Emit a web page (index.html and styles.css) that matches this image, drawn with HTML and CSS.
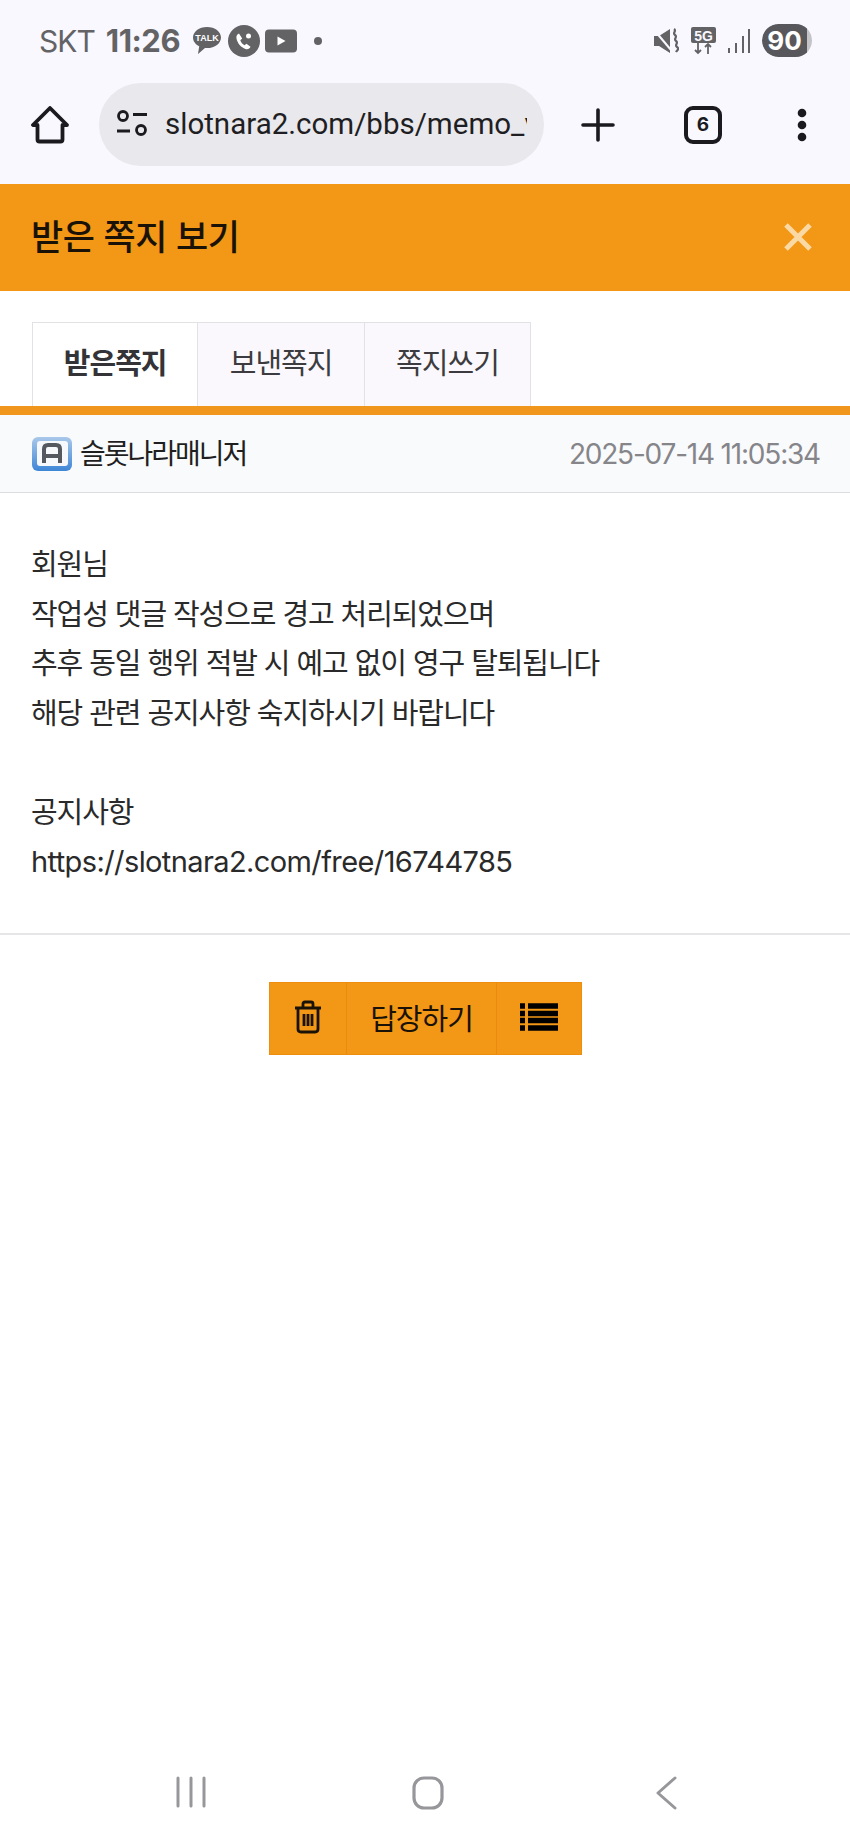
FILE: index.html
```html
<!DOCTYPE html>
<html lang="ko">
<head>
<meta charset="utf-8">
<title>받은 쪽지 보기</title>
<link rel="stylesheet" href="styles.css">
</head>
<body>
<div class="chrome">
  <div class="status">
    <div class="status-left">
      <span class="carrier">SKT</span>
      <span class="clock">11:26</span>
      <svg class="ic-talk" viewBox="0 0 30 30"><path d="M15 1C7 1 1 5.700 1 11.500c0 3.700 2.500 7 6.200 8.800L6 28l7-6c.7.100 1.300.1 2 .1 8 0 14-4.800 14-10.600S23 1 15 1z" fill="#636366"/><text x="15" y="15" class="talk-text">TALK</text></svg>
      <svg class="ic-call" viewBox="0 0 32 32"><circle cx="16" cy="16" r="16" fill="#636366"/><path d="M11 8.500c-2 1-3 2.500-2.500 5 .8 4.500 4.500 9 9 10.500 2.500.6 4.300-.4 5-2.300l-4-3-2 1.500c-2-1-3.500-3-4.200-5l1.900-1.700z" fill="#fff"/><circle cx="20.500" cy="11" r="2.500" fill="#fff"/></svg>
      <svg class="ic-yt" viewBox="0 0 32 24"><rect width="32" height="23" y=".5" rx="4" fill="#636366"/><path d="M12.500 7.500v9l8-4.500z" fill="#fff"/></svg>
      <span class="dot"></span>
    </div>
    <div class="status-right">
      <svg class="ic-mute" viewBox="0 0 26 26"><path d="M1 8h5l11-7v24l-11-7H1z" fill="#636366"/><path d="M2 3l16 19" stroke="#f8f8fe" stroke-width="2"/><path d="M21 1c3 2-2 4 1 6s-2 4 1 6-2 4 1 6 0 3-1 5" fill="none" stroke="#636366" stroke-width="2.200"/></svg>
      <svg class="ic-5g" viewBox="0 0 25 28"><rect width="25" height="16" rx="2" fill="#636366"/><text x="12.500" y="13.500" class="g-text">5G</text><path d="M7 16v10m-3-3l3 3 3-3M17 27V17m-3 3l3-3 3 3" fill="none" stroke="#636366" stroke-width="1.800"/></svg>
      <svg class="ic-sig" viewBox="0 0 24 26"><g fill="#636366"><rect x="1" y="20" width="2" height="5"/><rect x="8" y="15" width="2" height="10"/><rect x="15" y="8" width="2" height="17"/><rect x="21" y="1" width="2" height="24"/></g></svg>
      <span class="battery"><span class="battery-fill">90</span></span>
    </div>
  </div>
  <div class="toolbar">
    <svg class="ic-home" viewBox="0 0 38 38"><path d="M19 2L2 19h4.500v14.500a2 2 0 0 0 2 2h21a2 2 0 0 0 2-2V19H36z" fill="none" stroke="#1b1b1f" stroke-width="3.800" stroke-linejoin="round"/></svg>
    <div class="omnibox">
      <svg class="ic-tune" viewBox="0 0 32 26"><circle cx="7" cy="6" r="4.500" fill="none" stroke="#1b1b1f" stroke-width="2.800"/><path d="M17 4.500h14M1 21h13" stroke="#1b1b1f" stroke-width="2.800"/><circle cx="25" cy="20" r="4.500" fill="none" stroke="#1b1b1f" stroke-width="2.800"/></svg>
      <span class="url">slotnara2.com/bbs/memo_v</span>
    </div>
    <svg class="ic-plus" viewBox="0 0 34 34"><path d="M17 2v30M2 17h30" stroke="#1b1b1f" stroke-width="3.600" stroke-linecap="round"/></svg>
    <span class="tabcount">6</span>
    <svg class="ic-more" viewBox="0 0 10 34"><circle cx="5" cy="5" r="4.300" fill="#1b1b1f"/><circle cx="5" cy="17" r="4.300" fill="#1b1b1f"/><circle cx="5" cy="29" r="4.300" fill="#1b1b1f"/></svg>
  </div>
</div>

<header class="head">
  <h1 class="head-title">받은 쪽지 보기</h1>
  <svg class="ic-close" viewBox="0 0 32 32"><path d="M4 4l24 24M28 4L4 28" stroke="#fbd9a4" stroke-width="5"/></svg>
</header>

<nav class="tabs">
  <a class="tab tab-on">받은쪽지</a>
  <a class="tab">보낸쪽지</a>
  <a class="tab">쪽지쓰기</a>
</nav>

<div class="meta">
  <div class="sender">
    <svg class="ic-level" viewBox="0 0 42 36"><defs><linearGradient id="lv" x1="0" y1="0" x2="0" y2="1"><stop offset="0" stop-color="#a9c8ea"/><stop offset="1" stop-color="#3f86d6"/></linearGradient></defs><rect x="1" y="1" width="40" height="34" rx="6" fill="url(#lv)"/><rect x="6" y="5" width="31" height="25" rx="3" fill="#f6f8fb"/><path d="M13 27V13q0-4 4-4h8q4 0 4 4v14M13 20h16" fill="none" stroke="#55585e" stroke-width="4"/></svg>
    <span class="sender-name">슬롯나라매니저</span>
  </div>
  <time class="date">2025-07-14 11:05:34</time>
</div>

<article class="body">
  <p class="line">회원님</p>
  <p class="line">작업성 댓글 작성으로 경고 처리되었으며</p>
  <p class="line">추후 동일 행위 적발 시 예고 없이 영구 탈퇴됩니다</p>
  <p class="line">해당 관련 공지사항 숙지하시기 바랍니다</p>
  <p class="line">&nbsp;</p>
  <p class="line">공지사항</p>
  <p class="line line-url">https://slotnara2.com/free/16744785</p>
</article>

<div class="actions">
  <div class="btn-group">
    <a class="btn btn-icon"><svg class="ic-trash" viewBox="0 0 28 34"><path d="M1 8h26M9 7V4q0-2 2-2h6q2 0 2 2v3M4 8v21q0 3 3 3h14q3 0 3-3V8M10 14v12M14 14v12M18 14v12" fill="none" stroke="#1a1206" stroke-width="2.800"/></svg></a>
    <a class="btn btn-text">답장하기</a>
    <a class="btn btn-icon btn-list"><svg class="ic-list" viewBox="0 0 38 30"><path d="M0 4h5M8 4h30M0 11.500h5M8 11.500h30M0 18.500h5M8 18.500h30M0 26h5M8 26h30" stroke="#000" stroke-width="5.500"/></svg></a>
  </div>
</div>

<div class="spacer"></div>

<footer class="nav">
  <svg class="ic-recent" viewBox="0 0 32 32"><path d="M3 2v28M16 2v28M29 2v28" stroke="#97979b" stroke-width="3" stroke-linecap="round"/></svg>
  <svg class="ic-homebtn" viewBox="0 0 32 34"><rect x="2" y="2" width="28" height="30" rx="10" fill="none" stroke="#97979b" stroke-width="3.200"/></svg>
  <svg class="ic-back" viewBox="0 0 22 34"><path d="M20 2L3 17l17 15" fill="none" stroke="#97979b" stroke-width="3" stroke-linecap="round" stroke-linejoin="round"/></svg>
</footer>
</body>
</html>
```

FILE: styles.css
```css
* { box-sizing: border-box; }
html, body { margin: 0; padding: 0; }
body {
  width: 850px;
  height: 1842px;
  display: flex;
  flex-direction: column;
  background: #fff;
  font-family: Inter, "Noto Sans CJK KR", "Noto Sans", sans-serif;
  color: #1f1f1f;
  overflow: hidden;
}
.chrome { background: #f8f8fe; height: 184px; flex: none; }
.status {
  height: 83px;
  display: flex;
  justify-content: space-between;
  align-items: center;
  padding: 0 38px 2px 39px;
}
.status-left, .status-right { display: flex; align-items: center; }
.carrier { font: 400 30px/1 Inter, sans-serif; color: #636366; letter-spacing: -1px; }
.clock { font: 700 31px/1 Inter, sans-serif; color: #636366; margin-left: 11px; letter-spacing: -.5px; }
.ic-talk { width: 30px; height: 30px; margin-left: 12px; }
.talk-text { font: 700 9px "Liberation Sans", sans-serif; fill: #fff; text-anchor: middle; }
.ic-call { width: 32px; height: 32px; margin-left: 6px; }
.ic-yt { width: 32px; height: 24px; margin-left: 5px; }
.dot { width: 8px; height: 8px; border-radius: 50%; background: #636366; margin-left: 17px; }
.ic-mute { width: 26px; height: 26px; }
.ic-5g { width: 25px; height: 28px; margin-left: 12px; }
.g-text { font: 700 14px "Liberation Sans", sans-serif; fill: #f8f8fe; text-anchor: middle; }
.ic-sig { width: 24px; height: 26px; margin-left: 11px; }
.battery { width: 50px; height: 33px; margin-left: 11px; border-radius: 17px; background: #c4c4c8; overflow: hidden; display: block; }
.battery-fill { display: block; width: 45px; height: 33px; border-radius: 17px 4px 4px 17px; background: #58585c; color: #fff; font: 700 26px/33px Inter, sans-serif; text-align: center; }
.toolbar { height: 101px; display: flex; align-items: flex-start; position: relative; }
.ic-home { width: 38px; height: 38px; margin: 23px 0 0 31px; flex: none; }
.omnibox {
  width: 445px;
  height: 83px;
  margin-left: 30px;
  border-radius: 42px;
  background: #e8e8ed;
  display: flex;
  align-items: center;
  padding: 0 17px 0 17px;
  flex: none;
  overflow: hidden;
}
.ic-tune { width: 32px; height: 26px; flex: none; margin: 0 0 3px 0; }
.url { font: 400 29.500px/1.2 Roboto, sans-serif; color: #1f1f23; margin-left: 17px; white-space: nowrap; overflow: hidden; flex: 1; }
.ic-plus { width: 34px; height: 34px; margin: 25px 0 0 37px; flex: none; }
.tabcount {
  width: 38px; height: 38px; margin: 23px 0 0 69px; flex: none;
  border: 4px solid #1b1b1f; border-radius: 9px;
  font: 700 19px/30px Inter, sans-serif; text-align: center; color: #1b1b1f;
}
.ic-more { width: 10px; height: 34px; margin: 25px 0 0 75px; flex: none; }

.head {
  height: 107px;
  flex: none;
  background: #f29716;
  display: flex;
  align-items: center;
  justify-content: space-between;
  padding: 0 36px 0 31px;
}
.head-title { margin: 0 0 6px; font-size: 35px; font-weight: 500; color: #1a1206; letter-spacing: -.4px; }
.ic-close { width: 32px; height: 32px; margin-bottom: 2px; }

.tabs {
  flex: none;
  margin-top: 31px;
  padding-left: 32px;
  height: 93px;
  border-bottom: 9px solid #f0961d;
  display: flex;
}
.tab {
  width: 166.400px;
  height: 84px;
  border: 1px solid #e2e2e6;
  border-left-width: 0;
  border-bottom: 0;
  background: #fbf8fd;
  font-size: 29px;
  line-height: 82px;
  text-align: center;
  color: #3c3c40;
  letter-spacing: -1px;
}
.tab-on { background: #fff; border-left-width: 1px; font-weight: 700; color: #333338; }

.meta {
  flex: none;
  height: 78px;
  background: #f9fafc;
  border-bottom: 1px solid #dcdde0;
  padding: 0 30px 0 31px;
  display: flex;
  align-items: center;
  justify-content: space-between;
}
.sender { display: flex; align-items: center; }
.ic-level { width: 42px; height: 36px; }
.sender-name { font-size: 28px; color: #1f1f1f; margin: 0 0 4px 7px; letter-spacing: -2px; }
.date { font: 400 28px/1 Inter, sans-serif; color: #85858a; letter-spacing: -1.200px; }

.body { flex: none; padding: 47px 31px 0; border-bottom: 2px solid #e6e6e8; height: 442px; }
.line { margin: 0; font-size: 29px; line-height: 49.500px; color: #2a2a2a; letter-spacing: -1.100px; white-space: nowrap; }
.line-url { letter-spacing: -.6px; }

.actions { flex: none; display: flex; justify-content: center; padding-top: 47px; padding-left: 1px; }
.btn-group { display: flex; height: 73px; background: #f29716; border: 1px solid #ee8e10; }
.btn { display: flex; align-items: center; justify-content: center; height: 100%; }
.btn-icon { width: 76px; }
.btn-text { width: 151px; font-size: 29px; color: #1a1206; letter-spacing: -1px; padding-bottom: 3px; border-left: 1px solid #ea8a12; border-right: 1px solid #ea8a12; }
.btn-list { width: 84px; }
.ic-trash { width: 28px; height: 34px; margin-bottom: 3px; }
.ic-list { width: 38px; height: 30px; margin-bottom: 3px; }
.spacer { flex: 1; }
.nav {
  flex: none;
  height: 82px;
  display: flex;
  align-items: flex-start;
  padding: 16px 0 0 175px;
}
.ic-recent { width: 32px; height: 32px; }
.ic-homebtn { width: 32px; height: 34px; margin-left: 205px; }
.ic-back { width: 22px; height: 34px; margin-left: 211px; }
```
